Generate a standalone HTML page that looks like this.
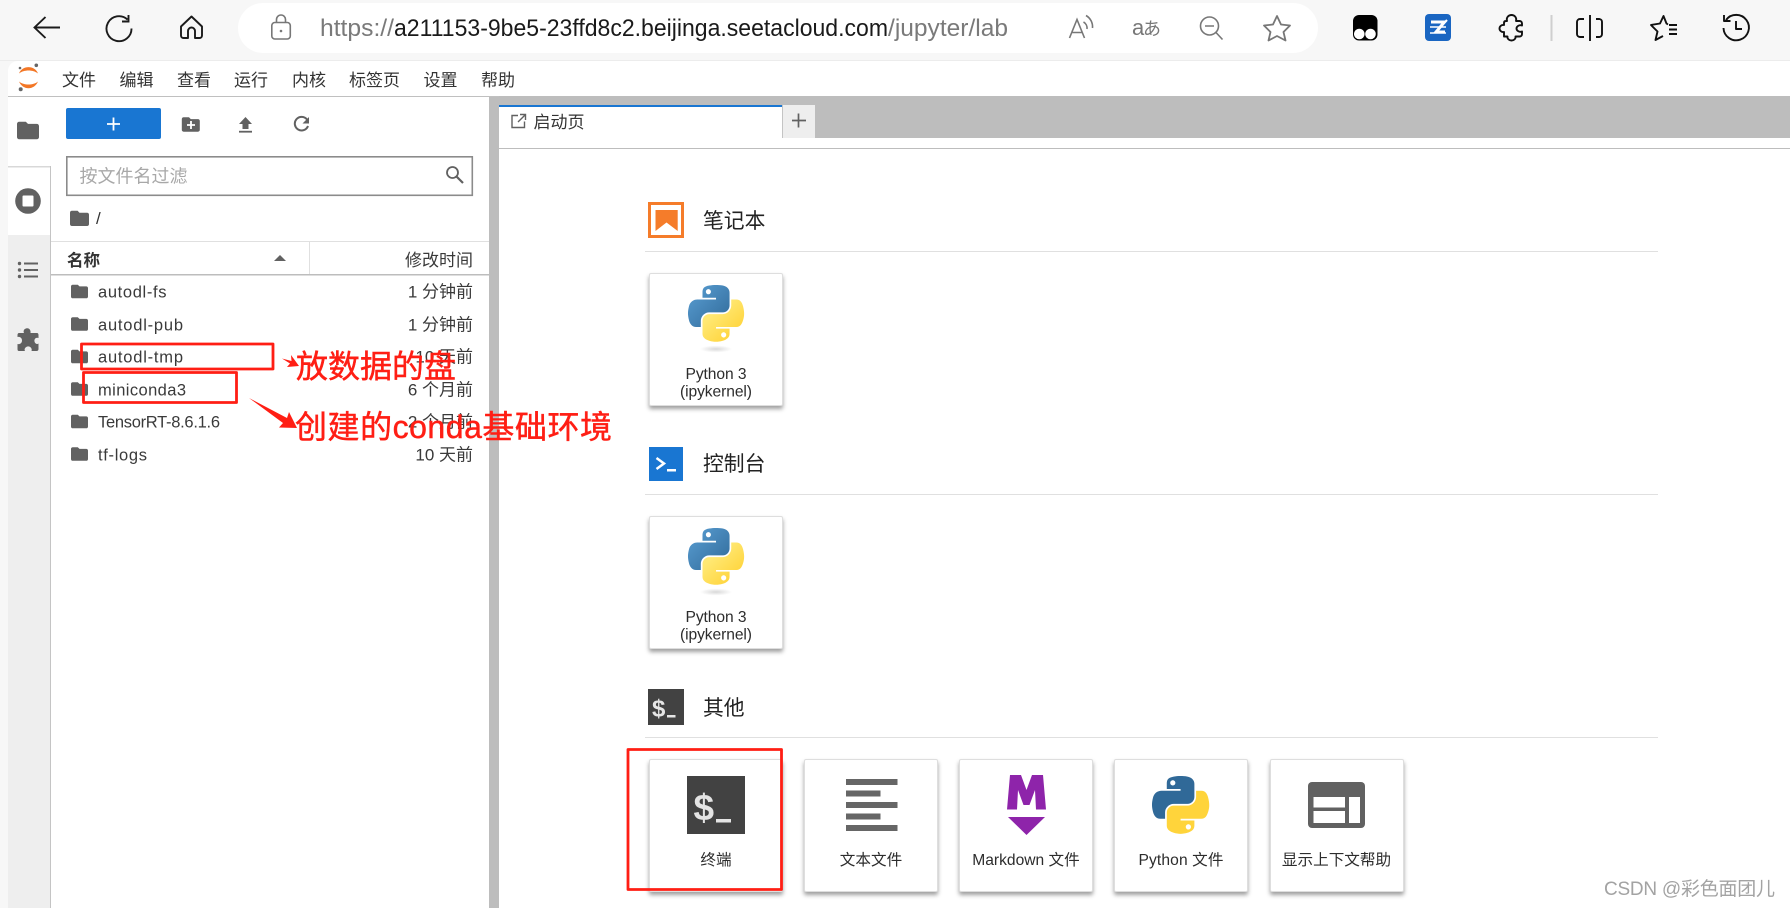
<!DOCTYPE html>
<html lang="zh">
<head>
<meta charset="utf-8">
<title>JupyterLab</title>
<style>
html,body{margin:0;padding:0;width:1790px;height:908px;overflow:hidden;background:#f7f7f7}
.card{position:absolute;box-sizing:border-box;background:#fff;border:1px solid #dedede;border-radius:2px;box-shadow:0 3px 4px rgba(0,0,0,.38)}
svg{position:absolute;left:0;top:0}
text{font-family:"Liberation Sans","Noto Sans CJK SC",sans-serif;fill:#2a2a2a;white-space:pre}
.m{font-size:17px;fill:#333}
.r{font-size:16.5px;fill:#3a3a3a}
.t{font-size:17px;fill:#3a3a3a;text-anchor:end}
.h{font-size:20.8px;fill:#222}
.l{font-size:15.6px;fill:#2c2c2c;text-anchor:middle}
.a{font-size:32px;fill:#ff1e14;stroke:#ff1e14;stroke-width:.45px}
</style>
</head>
<body>
<svg width="1790" height="908" viewBox="0 0 1790 908" style="z-index:0">
<rect x="0" y="0" width="1790" height="61" fill="#f7f7f7"/>
<path d="M8 908V71A10 10 0 0 1 18 61H1790V908Z" fill="#fff"/>
<rect x="8" y="166" width="42" height="742" fill="#eeeeee"/>
<rect x="8" y="166" width="42" height="69" fill="#fff"/>
<rect x="8" y="166" width="42" height="1.5" fill="#d8d8d8"/>
<rect x="50" y="166" width="1" height="742" fill="#c4c4c4"/>
<rect x="8" y="96" width="1782" height="1" fill="#c0c0c0"/>
<rect x="489" y="97" width="10" height="811" fill="#bdbdbd"/>
<rect x="499" y="96" width="1291" height="42" fill="#bdbdbd"/>
<rect x="499" y="105" width="283" height="33" fill="#fff"/>
<rect x="499" y="105" width="283" height="2" fill="#1976d2"/>
<rect x="783" y="105" width="32" height="33" fill="#eeeeee"/>
<rect x="782" y="105" width="1" height="33" fill="#c4c4c4"/>
<rect x="499" y="148" width="1291" height="1" fill="#bdbdbd"/>
<rect x="645" y="251" width="1013" height="1" fill="#e0e0e0"/>
<rect x="645" y="494" width="1013" height="1" fill="#e0e0e0"/>
<rect x="645" y="737" width="1013" height="1" fill="#e0e0e0"/>
<rect x="51" y="241" width="438" height="1" fill="#e0e0e0"/>
<rect x="51" y="274" width="438" height="1.5" fill="#bdbdbd"/>
<rect x="309" y="241" width="1" height="33" fill="#e0e0e0"/>
</svg>

<div class="card" style="left:649px;top:273px;width:134px;height:133px"></div>
<div class="card" style="left:649px;top:516px;width:134px;height:133px"></div>
<div class="card" style="left:649px;top:759px;width:134px;height:133px"></div>
<div class="card" style="left:804px;top:759px;width:134px;height:133px"></div>
<div class="card" style="left:959px;top:759px;width:134px;height:133px"></div>
<div class="card" style="left:1114px;top:759px;width:134px;height:133px"></div>
<div class="card" style="left:1270px;top:759px;width:134px;height:133px"></div>

<svg width="1790" height="908" viewBox="0 0 1790 908" style="z-index:1">
<defs>
<linearGradient id="gb" x1="0" y1="0" x2="1" y2="1"><stop offset="0" stop-color="#5a9fd4"/><stop offset="1" stop-color="#306998"/></linearGradient>
<linearGradient id="gy" x1="0.8" y1="0.85" x2="0.3" y2="0.3"><stop offset="0" stop-color="#ffd43b"/><stop offset="1" stop-color="#ffe873"/></linearGradient>
<radialGradient id="gs"><stop offset="0" stop-color="#b8b8b8" stop-opacity=".55"/><stop offset="1" stop-color="#b8b8b8" stop-opacity="0"/></radialGradient>
<path id="pyb" d="M54.9 0C50.3 0 46 .4 42.1 1.100 30.800 3.100 28.700 7.300 28.700 15V25.300H55.500V28.700H18.600C10.800 28.700 4 33.300 1.900 42.300-.6 52.500-.7 58.800 1.900 69.500 3.800 77.400 8.300 83.100 16.100 83.100H25.400V70.800C25.400 62 33 54.200 42.100 54.200H68.900C76.300 54.200 82.300 48.100 82.300 40.600V15C82.300 7.800 76.200 2.300 68.900 1.100 64.300.3 59.500 0 54.900 0ZM40.400 8.200C43.200 8.200 45.400 10.500 45.400 13.400 45.400 16.200 43.200 18.400 40.400 18.400 37.600 18.400 35.400 16.200 35.400 13.400 35.400 10.500 37.600 8.200 40.400 8.200Z"/>
<path id="pyy" d="M85.600 28.700V40.600C85.600 49.800 77.800 57.600 68.900 57.600H42.100C34.800 57.600 28.700 63.800 28.700 71.200V96.700C28.700 104 35 108.200 42.100 110.300 50.600 112.800 58.700 113.300 68.900 110.300 75.600 108.400 82.300 104.500 82.300 96.700V86.500H55.500V83.100H95.700C103.500 83.100 106.400 77.700 109.100 69.500 111.900 61.100 111.800 53 109.100 42.300 107.200 34.500 103.500 28.700 95.700 28.700ZM70.600 93.600C73.400 93.600 75.700 95.900 75.700 98.700 75.700 101.600 73.400 103.900 70.600 103.900 67.900 103.900 65.600 101.600 65.600 98.700 65.600 95.900 67.900 93.600 70.600 93.600Z"/>
<symbol id="folder" viewBox="0 0 24 24"><path fill="#616161" d="M10 4H4c-1.100 0-2 .9-2 2v12c0 1.100.9 2 2 2h16c1.100 0 2-.9 2-2V8c0-1.100-.9-2-2-2h-8l-2-2z"/></symbol>
</defs>

<!-- browser chrome -->
<rect x="238" y="3" width="1080" height="50" rx="25" fill="#fff"/>
<rect x="0" y="60" width="1790" height="1" fill="#ececec"/>
<g fill="none" stroke="#1b1b1b" stroke-width="1.900">
<path d="M60 27.500H34.500M45.500 17L34.500 27.500L45.500 38"/>
<path d="M127.500 19.500A12.500 12.500 0 1 0 131.500 28.500"/>
<path d="M128.500 15V21.500H122"/>
<path d="M191.500 16.500L181 26.500V35.500A2.500 2.500 0 0 0 183.500 38H188V31A3.500 3.500 0 0 1 195 31V38H199.500A2.500 2.500 0 0 0 202 35.500V26.500Z" stroke-linejoin="round"/>
</g>
<g fill="none" stroke="#777" stroke-width="1.600">
<rect x="271.800" y="22.500" width="18.500" height="16.500" rx="3"/>
<path d="M276.500 22.500V19.500A4.500 4.500 0 0 1 285.500 19.500V22.500"/>
<path d="M1069.500 38L1077 19.500L1084.500 38M1072 32.500H1082"/>
<path d="M1083.500 22A7 7 0 0 1 1087 29M1086 15.500A13 13 0 0 1 1092.500 28"/>
<circle cx="1209.500" cy="26" r="9"/>
<path d="M1205 26H1214M1216 32.500L1222.500 39.500"/>
<path stroke-width="1.800" stroke-linejoin="round" d="M1277 16L1281 24.500L1290 25.500L1283.500 32L1285.500 40.500L1277 36L1268.500 40.500L1270.500 32L1264 25.500L1273 24.500Z"/>
</g>
<circle cx="281" cy="31" r="1.300" fill="#777"/>
<text x="1132" y="35" font-size="22" style="fill:#777">a</text>
<text x="1143" y="35" font-size="18" style="fill:#777">あ</text>
<text x="320" y="36" font-size="24" style="fill:#7a7a7a" textLength="74" lengthAdjust="spacingAndGlyphs">https://</text>
<text x="394" y="36" font-size="24" style="fill:#1a1a1a" textLength="494" lengthAdjust="spacingAndGlyphs">a211153-9be5-23ffd8c2.beijinga.seetacloud.com</text>
<text x="888" y="36" font-size="24" style="fill:#7a7a7a" textLength="120" lengthAdjust="spacingAndGlyphs">/jupyter/lab</text>

<rect x="1353" y="15" width="24.500" height="25.500" rx="6" fill="#000"/>
<circle cx="1359.300" cy="34" r="5.300" fill="#fff"/><circle cx="1370.500" cy="34" r="5.300" fill="#fff"/>
<rect x="1425" y="14" width="26" height="27" rx="4" fill="#1a66c2"/>
<path d="M1431 22H1444.500L1436 32H1445" fill="none" stroke="#fff" stroke-width="3"/>
<path d="M1430 27H1446M1430 33H1446" stroke="#fff" stroke-width="1.500"/>
<path d="M1443 24L1447 20" stroke="#fff" stroke-width="2"/>
<g fill="none" stroke="#111" stroke-width="1.900" stroke-linejoin="round">
<path d="M1507 21C1506 17 1509 15 1511.500 15C1514 15 1517 17 1516 21H1519.500C1521 21 1522 22 1522 23.500V25.500C1519 24.500 1516.500 26.500 1516.500 28.500C1516.500 30.500 1519 32.500 1522 31.500V34C1522 35.500 1521 36.500 1519.500 36.500H1515.500C1516 38.500 1514 40.500 1511.500 40.500C1509 40.500 1507 38.500 1507.500 36.500H1504V32C1501.500 32.500 1499.500 30.500 1499.500 28.500C1499.500 26.500 1501.500 24.500 1504 25V23C1504 22 1504.500 21 1506 21Z"/>
<path d="M1584 19H1580A3 3 0 0 0 1577 22V34A3 3 0 0 0 1580 37H1584M1596 19H1599.500A3 3 0 0 1 1602 22V34A3 3 0 0 1 1599.500 37H1596M1590 15V41"/>
<path d="M1668 24.500L1666.500 23.500L1663.500 16L1660 23.500L1651 25L1657.500 31.500L1655.500 40L1663 36"/>
<path d="M1669 25H1677M1669 29.500H1677M1669 34H1677"/>
<path d="M1726 20A12.700 12.700 0 1 1 1723.500 28M1724 15V21H1730.500"/>
<path d="M1736 21V29H1742"/>
</g>
<rect x="1550.500" y="15" width="2" height="26" fill="#cfcfcf"/>

<!-- menu bar -->
<path d="M19 73.500C22 65 35 65 38 73.500C33 69.500 24 69.500 19 73.500Z" fill="#f37726"/>
<path d="M19 81.500C23 90.500 34 90.500 38 81.500C33 85.500 24 85.500 19 81.500Z" fill="#f37726"/>
<circle cx="36.300" cy="65.300" r="1.800" fill="#666"/><circle cx="20" cy="68" r="1.300" fill="#666"/><circle cx="20.700" cy="89.300" r="2" fill="#666"/>
<text class="m" x="62" y="86">文件</text>
<text class="m" x="119.500" y="86">编辑</text>
<text class="m" x="177" y="86">查看</text>
<text class="m" x="234" y="86">运行</text>
<text class="m" x="292" y="86">内核</text>
<text class="m" x="349" y="86">标签页</text>
<text class="m" x="423.500" y="86">设置</text>
<text class="m" x="481" y="86">帮助</text>

<!-- sidebar -->
<use href="#folder" x="14.800" y="117.300" width="26.400" height="26.400"/>
<circle cx="28" cy="201" r="12.800" fill="#616161"/>
<rect x="22.500" y="195.500" width="11" height="11" rx="1" fill="#fff"/>
<g fill="#616161">
<circle cx="19.500" cy="263.500" r="1.700"/><circle cx="19.500" cy="270" r="1.700"/><circle cx="19.500" cy="276.500" r="1.700"/>
<rect x="24" y="262.500" width="14" height="2"/><rect x="24" y="269" width="14" height="2"/><rect x="24" y="275.500" width="14" height="2"/>
<path d="M26 328.500C29 327.500 31 330 30.500 333H37C38 333 38.500 334 38.500 335V338C36 337 34 339 34.500 341.500 35 344 37.500 344.500 38.500 343.500V349C38.500 350.500 37.500 351 36.500 351H31.500C32.500 348.500 30 346 27.500 346.500 25 347 24 349.500 25 351H19C18 351 17.500 350.500 17.500 349V344C19.500 344.500 22 343.500 22 340.500 22 337.500 19.500 336.500 17.500 337V335C17.500 334 18 333 19 333H24C23 331 24 329 26 328.500Z"/>
</g>

<!-- file browser toolbar -->
<rect x="66" y="108" width="95" height="31" rx="2" fill="#1976d2"/>
<path d="M113.500 117.500V130.500M107 124H120" stroke="#fff" stroke-width="1.800"/>
<use href="#folder" x="180" y="113.700" width="21.600" height="21.600"/>
<path d="M191 121V129M187 125H195" stroke="#fff" stroke-width="1.800"/>
<path d="M245.500 117L252 124H248.500V129H242.500V124H239Z" fill="#616161"/>
<rect x="239" y="130.800" width="13" height="1.800" fill="#616161"/>
<path d="M307 119.500A6.800 6.800 0 1 0 308 126" fill="none" stroke="#616161" stroke-width="2"/>
<path d="M309 117V123.500H302.500Z" fill="#616161"/>

<rect x="66.800" y="156.800" width="405.500" height="38.500" fill="#fff" stroke="#8b8b8b" stroke-width="1.600"/>
<text x="79.500" y="182.500" font-size="18" style="fill:#a8a8a8">按文件名过滤</text>
<circle cx="452.500" cy="172.500" r="5.500" fill="none" stroke="#616161" stroke-width="1.800"/>
<path d="M456.500 176.500L463 183" stroke="#616161" stroke-width="2.200"/>

<use href="#folder" x="68.100" y="207" width="22.800" height="22.800"/>
<text x="96" y="224" font-size="17" style="fill:#333">/</text>

<text x="67" y="266" font-size="16.500" font-weight="700" style="fill:#333">名称</text>
<path d="M274 261H286L280 255Z" fill="#616161"/>
<text class="t" x="473" y="266">修改时间</text>

<!-- rows -->
<use href="#folder" x="69.300" y="281.300" width="20.400" height="20.400"/>
<use href="#folder" x="69.300" y="313.800" width="20.400" height="20.400"/>
<use href="#folder" x="69.300" y="346.300" width="20.400" height="20.400"/>
<use href="#folder" x="69.300" y="378.800" width="20.400" height="20.400"/>
<use href="#folder" x="69.300" y="411.300" width="20.400" height="20.400"/>
<use href="#folder" x="69.300" y="443.800" width="20.400" height="20.400"/>
<text class="r" x="98" y="297.500" textLength="68.500">autodl-fs</text>
<text class="r" x="98" y="330.500" textLength="85">autodl-pub</text>
<text class="r" x="98" y="362.500" textLength="85">autodl-tmp</text>
<text class="r" x="98" y="395.500" textLength="88">miniconda3</text>
<text class="r" x="98" y="427.500" textLength="122">TensorRT-8.6.1.6</text>
<text class="r" x="98" y="460.500" textLength="49">tf-logs</text>
<text class="t" x="473" y="297.500">1 分钟前</text>
<text class="t" x="473" y="330.500">1 分钟前</text>
<text class="t" x="473" y="362.500">10 天前</text>
<text class="t" x="473" y="395.500">6 个月前</text>
<text class="t" x="473" y="427.500">2 个月前</text>
<text class="t" x="473" y="460.500">10 天前</text>

<!-- tabs -->
<path d="M518 115.500H512V127.500H524.500V121.500M520 114.500H525.500V120M525.300 114.800L518 122" fill="none" stroke="#616161" stroke-width="1.400"/>
<text x="533.500" y="128" font-size="17" style="fill:#333">启动页</text>
<path d="M798.500 113.500V127.500M792 120.500H806" stroke="#616161" stroke-width="1.700"/>

<!-- launcher -->
<rect x="649.500" y="203.500" width="33" height="33" fill="#fff" stroke="#f57c2a" stroke-width="3"/>
<path d="M655.500 210H677.700V231L666.500 222.500L655.500 231Z" fill="#f57c2a"/>
<text class="h" x="703" y="228">笔记本</text>
<rect x="649" y="447" width="34" height="34" fill="#1976d2"/>
<path d="M656.500 458L664 463.500L656.500 469" fill="none" stroke="#fff" stroke-width="2.500"/>
<rect x="667" y="469" width="9" height="2.500" fill="#fff"/>
<text class="h" x="703" y="471">控制台</text>
<rect x="648" y="689" width="36" height="36" fill="#424242"/>
<text x="652" y="716.500" font-size="24" font-weight="700" style="fill:#e6e6e6">$</text>
<rect x="667" y="715" width="8.500" height="2.500" fill="#e6e6e6"/>
<text class="h" x="703" y="715">其他</text>

<!-- python kernels -->
<ellipse cx="716" cy="349" rx="16" ry="3.500" fill="url(#gs)"/>
<g transform="translate(688 285) scale(.505)"><use href="#pyb" fill="url(#gb)"/><use href="#pyy" fill="url(#gy)"/></g>
<text class="l" x="716" y="379" textLength="61">Python 3</text>
<text class="l" x="716" y="396.500" textLength="72">(ipykernel)</text>
<ellipse cx="716" cy="592" rx="16" ry="3.500" fill="url(#gs)"/>
<g transform="translate(688 528) scale(.505)"><use href="#pyb" fill="url(#gb)"/><use href="#pyy" fill="url(#gy)"/></g>
<text class="l" x="716" y="622" textLength="61">Python 3</text>
<text class="l" x="716" y="639.500" textLength="72">(ipykernel)</text>

<!-- other -->
<rect x="687" y="776" width="58" height="58" fill="#424242"/>
<text x="693.500" y="820" font-size="37" font-weight="700" style="fill:#e4e4e4">$</text>
<rect x="716" y="819" width="15" height="3.500" fill="#e4e4e4"/>
<text class="l" x="716" y="865">终端</text>

<g fill="#666">
<rect x="846" y="779" width="51.500" height="6"/>
<rect x="846" y="790.500" width="34.500" height="6"/>
<rect x="846" y="802" width="51.500" height="6"/>
<rect x="846" y="813.500" width="34.500" height="6"/>
<rect x="846" y="825" width="51.500" height="6"/>
</g>
<text class="l" x="871" y="865">文本文件</text>

<path d="M1007 809.500L1010 775H1021L1026.500 790L1032 775H1043L1046 809.500H1036L1035 790L1029.500 805H1023.500L1018 790L1017 809.500Z" fill="#8e24aa"/>
<path d="M1008 817H1045L1026.500 835Z" fill="#8e24aa"/>
<text class="l" x="1026" y="865">Markdown 文件</text>

<g transform="translate(1152 776) scale(.515)"><use href="#pyb" fill="#306998"/><use href="#pyy" fill="#ffd43b"/></g>
<text class="l" x="1181" y="865" textLength="85">Python 文件</text>

<rect x="1308" y="782" width="57" height="46" rx="4" fill="#616161"/>
<rect x="1313.500" y="797" width="31.500" height="10.500" fill="#fff"/>
<rect x="1313.500" y="811" width="31.500" height="12" fill="#fff"/>
<rect x="1349" y="797" width="11" height="26" fill="#fff"/>
<text class="l" x="1336.500" y="865">显示上下文帮助</text>

<!-- annotations -->
<g fill="none" stroke="#ff1e14" stroke-width="2.800" stroke-linejoin="round">
<rect x="81.500" y="344" width="191.500" height="25"/>
<rect x="83.500" y="372.500" width="153" height="30"/>
<rect x="628" y="749.500" width="153.500" height="140"/>
</g>
<path d="M282 358.500L291.500 361L291 355L299 366L287 367L290 363.500Z" fill="#ff1e14"/>
<path d="M249 398L287 418L289 412L297 428L279 427.500L283 423Z" fill="#ff1e14"/>
<text class="a" x="296" y="377.500" textLength="160">放数据的盘</text>
<text class="a" x="295" y="438" textLength="317">创建的conda基础环境</text>

<text x="1604" y="895" font-size="19" style="fill:#a3a3a3" textLength="171">CSDN @彩色面团儿</text>
</svg>
</body>
</html>
